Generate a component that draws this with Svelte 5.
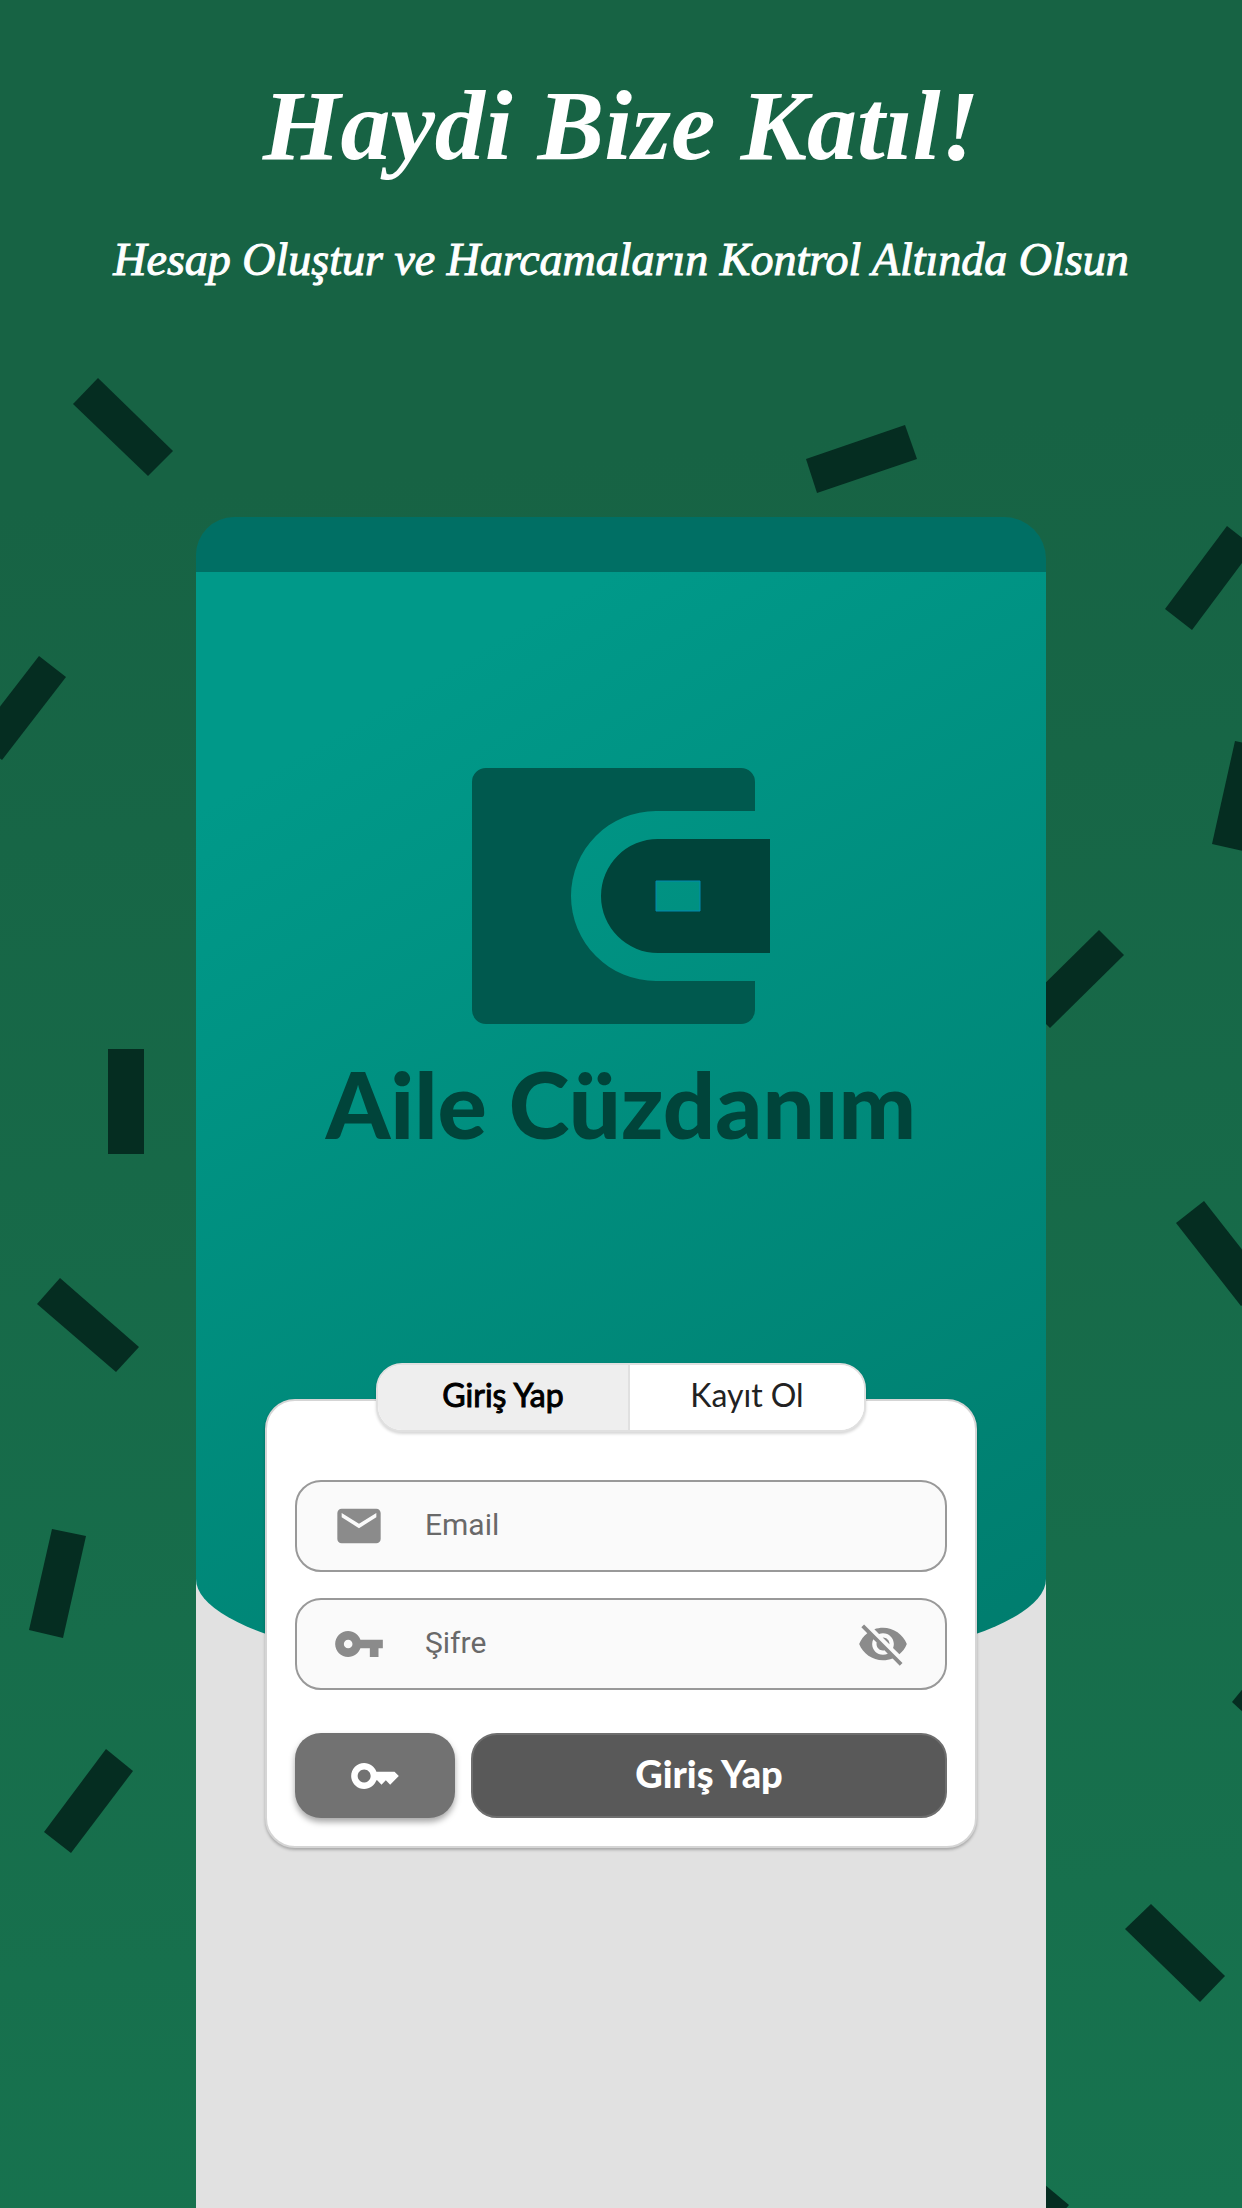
<script>
  let mode = $state('login');
  let visible = $state(false);

  const confetti = [
    '98,378 173,451 148,476 73,404',
    '905,425 917,459 817,493 806,459',
    '1227,526 1254,547 1192,630 1165,609',
    '39,656 66,677 2,760 -25,739',
    '1235,741 1271,749 1248,852 1212,844',
    '1099,930 1124,955 1050,1028 1025,1003',
    '108,1049 144,1049 144,1154 108,1154',
    '1204,1201 1269,1284 1241,1306 1176,1223',
    '60,1278 139,1347 116,1372 37,1304',
    '52,1529 86,1536 63,1638 29,1630',
    '1232,1702 1260,1668 1285,1690 1257,1725',
    '106,1749 133,1771 71,1853 44,1832',
    '1151,1904 1225,1976 1200,2002 1125,1929',
    '1020,2164 1069,2205 1045,2232 996,2191'
  ];
</script>

<div class="page">
  <svg class="confetti" viewBox="0 0 1242 2208" preserveAspectRatio="xMidYMin slice" aria-hidden="true">
    {#each confetti as points}
      <polygon {points} />
    {/each}
  </svg>

  <header>
    <h1>Haydi Bize Katıl!</h1>
    <p>Hesap Oluştur ve Harcamaların Kontrol Altında Olsun</p>
  </header>

  <main>
    <div class="statusbar"></div>
    <section class="hero">
      <svg class="logo" viewBox="0 0 298 256" aria-hidden="true">
        <path
          class="wallet"
          d="M14 0H269a14 14 0 0 1 14 14V43H184a85 85 0 0 0 0 170h99v29a14 14 0 0 1-14 14H14a14 14 0 0 1-14-14V14A14 14 0 0 1 14 0z"
        />
        <path class="pocket" fill-rule="evenodd" d="M186 71H298V185H186a57 57 0 0 1 0-114zM184 113v30h44v-30z" />
        <path class="glint" d="M184 113h44v30h-44z" />
      </svg>
      <h2>Aile Cüzdanım</h2>
    </section>

    <form class="card" onsubmit={(e) => e.preventDefault()}>
      <div class="tabs">
        <button type="button" class:active={mode === 'login'} onclick={() => (mode = 'login')}>Giriş Yap</button>
        <button type="button" class:active={mode === 'signup'} onclick={() => (mode = 'signup')}>Kayıt Ol</button>
      </div>

      <div class="field">
        <svg class="icon" viewBox="0 0 24 24" aria-hidden="true">
          <path d="M20 4H4c-1.1 0-1.99.9-1.99 2L2 18c0 1.1.9 2 2 2h16c1.1 0 2-.9 2-2V6c0-1.1-.9-2-2-2zm0 4l-8 5-8-5V6l8 5 8-5v2z" />
        </svg>
        <input type="email" placeholder="Email" aria-label="Email" />
      </div>

      <div class="field">
        <svg class="icon" viewBox="0 0 24 24" aria-hidden="true">
          <path d="M12.65 10C11.83 7.67 9.61 6 7 6c-3.31 0-6 2.69-6 6s2.69 6 6 6c2.61 0 4.83-1.67 5.65-4H17v4h4v-4h2v-4H12.65zM7 14c-1.1 0-2-.9-2-2s.9-2 2-2 2 .9 2 2-.9 2-2 2z" />
        </svg>
        <input type={visible ? 'text' : 'password'} placeholder="Şifre" aria-label="Şifre" />
        <button type="button" class="eye" aria-label="Şifreyi göster" onclick={() => (visible = !visible)}>
          <svg class="icon" viewBox="0 0 24 24" aria-hidden="true">
            <path d="M12 7c2.76 0 5 2.24 5 5 0 .65-.13 1.26-.36 1.83l2.92 2.92c1.51-1.26 2.7-2.89 3.43-4.75-1.73-4.39-6-7.5-11-7.5-1.4 0-2.74.25-3.98.7l2.16 2.16C10.74 7.13 11.35 7 12 7zM2 4.27l2.28 2.28.46.46C3.08 8.3 1.78 10.02 1 12c1.73 4.39 6 7.5 11 7.5 1.55 0 3.03-.3 4.38-.84l.42.42L19.73 22 21 20.73 3.27 3 2 4.27zM7.53 9.8l1.55 1.55c-.05.21-.08.43-.08.65 0 1.66 1.34 3 3 3 .22 0 .44-.03.65-.08l1.55 1.55c-.67.33-1.41.53-2.2.53-2.76 0-5-2.24-5-5 0-.79.2-1.53.53-2.2zm4.31-.78l3.15 3.15.02-.16c0-1.66-1.34-3-3-3l-.17.01z" />
          </svg>
        </button>
      </div>

      <div class="actions">
        <button type="button" class="reset" aria-label="Şifremi unuttum">
          <svg class="icon" viewBox="0 0 24 24" aria-hidden="true">
            <path d="M21 10h-8.35C11.83 7.67 9.61 6 7 6c-3.31 0-6 2.69-6 6s2.69 6 6 6c2.61 0 4.83-1.67 5.65-4H13l2 2 2-2 2 2 4-4.04L21 10zM7 15c-1.65 0-3-1.35-3-3s1.35-3 3-3 3 1.35 3 3-1.35 3-3 3z" />
          </svg>
        </button>
        <button type="submit" class="submit">Giriş Yap</button>
      </div>
    </form>
  </main>
</div>

<style>
  :global(body) {
    margin: 0;
  }
  .page {
    position: relative;
    min-height: 100vh;
    display: flex;
    flex-direction: column;
    align-items: center;
    overflow: hidden;
    box-sizing: border-box;
    background: linear-gradient(175deg, #176344 0%, #176344 22%, #17734f 100%);
    font-family: Lato, 'Liberation Sans', sans-serif;
  }
  .confetti {
    position: absolute;
    inset: 0;
    width: 100%;
    height: 100%;
    fill: #052d21;
  }
  header {
    position: relative;
    display: flex;
    flex-direction: column;
    gap: 36px;
    padding: 64px 24px 0;
    color: #fff;
    text-align: center;
    font-family: 'Liberation Serif', serif;
    font-style: italic;
  }
  h1,
  h2,
  p {
    margin: 0;
  }
  h1 {
    font-size: 100px;
    line-height: 124px;
    font-weight: 700;
  }
  header p {
    font-size: 46px;
    line-height: 72px;
    -webkit-text-stroke: 1px #fff;
  }
  main {
    position: relative;
    flex: 1;
    width: 100%;
    max-width: 850px;
    margin-top: 221px;
    border-radius: 38px 42px 0 0;
    background: linear-gradient(#006f64 55px, #e1e1e1 55px);
  }
  .statusbar {
    height: 55px;
  }
  .hero {
    display: flex;
    flex-direction: column;
    align-items: center;
    gap: 24px;
    box-sizing: border-box;
    min-height: 1107px;
    padding-top: 196px;
    border-radius: 0 0 50% 50% / 0 0 100px 100px;
    background: linear-gradient(150deg, #009989 15%, #007c6d 100%);
  }
  .logo {
    width: 298px;
    height: 256px;
  }
  .wallet {
    fill: #00594e;
  }
  .pocket {
    fill: #00443a;
  }
  .glint {
    fill: none;
    stroke: #0089b0;
  }
  h2 {
    font-size: 92px;
    line-height: 112px;
    font-weight: 900;
    color: #00443a;
  }
  .card {
    display: flex;
    flex-direction: column;
    gap: 26px;
    box-sizing: border-box;
    max-width: 712px;
    margin: -280px auto 0;
    padding: 0 28px 28px;
    border: 2px solid #d5d5d5;
    border-radius: 30px;
    background: #fff;
    box-shadow: 0 2px 3px rgba(0, 0, 0, 0.25);
  }
  button {
    border: 0;
    padding: 0;
    font: inherit;
    cursor: pointer;
  }
  .tabs {
    align-self: center;
    display: grid;
    grid-template-columns: 250px 236px;
    box-sizing: border-box;
    height: 69px;
    margin: -38px 0 22px;
    border: 2px solid #e0e0e0;
    border-radius: 26px;
    overflow: hidden;
    background: #fff;
    box-shadow: 0 2px 3px rgba(0, 0, 0, 0.16);
  }
  .tabs button {
    padding-bottom: 6px;
    font-size: 32px;
    background: #fff;
    color: #222;
  }
  .tabs button + button {
    border-left: 2px solid #e0e0e0;
  }
  .tabs .active {
    background: #eee;
    color: #000;
    -webkit-text-stroke: 1px #000;
  }
  .field {
    display: flex;
    align-items: center;
    gap: 40px;
    box-sizing: border-box;
    height: 92px;
    padding: 0 36px;
    border: 2px solid #999;
    border-radius: 26px;
    background: #fafafa;
  }
  .icon {
    display: block;
    flex: none;
    width: 52px;
    height: 52px;
    fill: #8b8b8b;
  }
  input {
    flex: 1;
    min-width: 0;
    padding: 0 0 4px;
    border: 0;
    outline: 0;
    background: none;
    font-family: Roboto, sans-serif;
    font-size: 30px;
    color: #222;
  }
  input::placeholder {
    color: #696969;
    opacity: 1;
  }
  .eye {
    background: none;
  }
  .actions {
    display: grid;
    grid-template-columns: 160px 1fr;
    gap: 16px;
    margin-top: 17px;
  }
  .actions button {
    height: 85px;
    display: flex;
    align-items: center;
    justify-content: center;
    border-radius: 26px;
    color: #fff;
  }
  .actions .icon {
    fill: #fff;
  }
  .reset {
    background: #727272;
    box-shadow: 0 4px 6px rgba(0, 0, 0, 0.35);
  }
  .actions .submit {
    box-sizing: border-box;
    padding-bottom: 6px;
    border: 2px solid #6e6e6e;
    background: #595959;
    font-size: 38px;
    font-weight: 900;
  }
</style>
